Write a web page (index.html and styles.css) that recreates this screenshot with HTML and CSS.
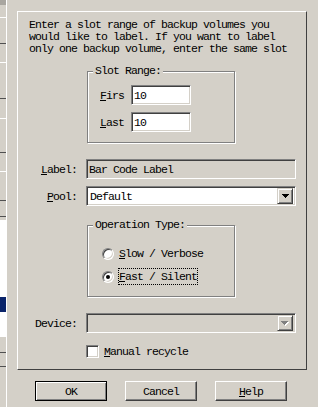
FILE: index.html
```html
<!DOCTYPE html>
<html lang="en">
<head>
  <meta charset="UTF-8">
  <title>Label Volumes</title>
  <link rel="stylesheet" href="styles.css">
</head>
<body>
  <div class="app">
    <div class="side">
      <div class="sd-top"></div>
      <div class="sp12"></div>
      <div class="sd-lt"></div>
      <div class="sp25"></div>
      <div class="sd-dk"></div>
      <div class="sp18"></div>
      <div class="sd-lt"></div>
      <div class="sp35"></div>
      <div class="sd-dk"></div>
      <div class="sp19"></div>
      <div class="sd-lt"></div>
      <div class="sp33"></div>
      <div class="sd-dk"></div>
      <div class="sp18"></div>
      <div class="sd-lt"></div>
      <div class="sp28"></div>
      <div class="sd-dk"></div>
      <div class="sp15"></div>
      <div class="sd-dk"></div>
      <div class="sp3"></div>
      <div class="sd-wh h77"></div>
      <div class="sd-sel"></div>
      <div class="sd-wh h25"></div>
      <div class="sp15"></div>
      <div class="sd-dk"></div>
      <div class="sp13"></div>
      <div class="sd-dk"></div>
    </div>

    <div class="main">
      <div class="panel">
        <p class="intro">Enter a slot range of backup volumes you<br>would like to label. If you want to label<br>only one backup volume, enter the same slot</p>

        <div class="grp slot">
          <div class="lgnd">Slot Range:</div>
          <div class="srow first"><span class="slab"><u>F</u>irs</span><div class="fld sfld">10</div></div>
          <div class="srow"><span class="slab"><u>L</u>ast</span><div class="fld sfld">10</div></div>
        </div>

        <div class="frow r-label">
          <span class="flab"><u>L</u>abel:</span>
          <div class="fld wide off">Bar Code Label</div>
        </div>

        <div class="frow r-pool">
          <span class="flab"><u>P</u>ool:</span>
          <div class="fld wide combo">
            <span class="ctxt">Default</span>
            <span class="ddbtn">
              <svg width="7" height="4" viewBox="0 0 7 4" shape-rendering="crispEdges"><path d="M0 0H7V1H6V2H5V3H4V4H3V3H2V2H1V1H0Z" fill="#000"/></svg>
            </span>
          </div>
        </div>

        <div class="grp optype">
          <div class="lgnd">Operation Type:</div>
          <div class="rrow first"><span class="radio"></span><span class="rtxt"><u>S</u>low / Verbose</span></div>
          <div class="rrow"><span class="radio on"></span><span class="rtxt focus"><u>F</u>ast / Silent</span></div>
        </div>

        <div class="frow r-dev">
          <span class="flab">Device:</span>
          <div class="fld wide off combo">
            <span class="ctxt"></span>
            <span class="ddbtn">
              <svg width="8" height="5" viewBox="0 0 8 5" shape-rendering="crispEdges"><path d="M1 1H8V2H7V3H6V4H5V5H4V4H3V3H2V2H1Z" fill="#fff"/><path d="M0 0H7V1H6V2H5V3H4V4H3V3H2V2H1V1H0Z" fill="#808080"/></svg>
            </span>
          </div>
        </div>

        <div class="chkrow">
          <span class="chk"></span><span class="ctxt2"><u>M</u>anual recycle</span>
        </div>
      </div>

      <div class="btns">
        <button class="btn dflt">OK</button>
        <button class="btn">Cancel</button>
        <button class="btn"><u>H</u>elp</button>
      </div>
    </div>
  </div>
</body>
</html>
```

FILE: styles.css
```css
body {
  margin: 0;
  background: #d4d0c8;
  color: #000;
  font-family: "Liberation Mono", "DejaVu Sans Mono", monospace;
  font-size: 11.5px;
  letter-spacing: -0.9px;
}

.app {
  display: flex;
  min-height: 407px;
}

/* strip of the window behind */
.side {
  width: 6px;
  border-right: 1px solid #fff;
  display: flex;
  flex-direction: column;
  flex-shrink: 0;
}
.side div { flex-shrink: 0; }
.sd-top { height: 5px; background: #a9a6a0; }
.sd-lt { height: 1px; background: #fff; }
.sd-dk { height: 1px; background: #505050; }
.sd-wh { background: #fff; }
.sd-sel { height: 15px; background: #0a246a; }
.h77 { height: 77px; }
.h25 { height: 25px; }
.sp3 { height: 3px; }
.sp12 { height: 12px; }
.sp13 { height: 13px; }
.sp15 { height: 15px; }
.sp18 { height: 18px; }
.sp19 { height: 19px; }
.sp25 { height: 25px; }
.sp28 { height: 28px; }
.sp33 { height: 33px; }
.sp35 { height: 35px; }

.main { flex: 1; }

.panel {
  margin: 11px 0 0 10px;
  width: 290px;
  box-sizing: border-box;
  border: 1px solid;
  border-color: #fff #404040 #404040 #fff;
  padding-bottom: 11px;
}

.intro {
  margin: 7px 0 0 11px;
  line-height: 12px;
  white-space: nowrap;
}

/* group boxes */
.grp {
  margin-left: 69px;
  width: 148px;
  box-sizing: border-box;
  border: 1px solid #808080;
  box-shadow: inset 1px 1px #fff, 1px 1px #fff;
  display: flex;
  flex-direction: column;
}
.lgnd {
  align-self: flex-start;
  margin: -7px 0 0 5px;
  padding: 0 2px;
  line-height: 12px;
  background: #d4d0c8;
}
.slot {
  margin-top: 16px;
  padding-bottom: 10px;
}
.optype {
  margin-top: 19px;
  padding-bottom: 11px;
}

.srow {
  display: flex;
  align-items: center;
  height: 20px;
  margin: 7px 0 0 12px;
}
.srow.first { margin-top: 8px; }
.slab { width: 24px; margin-right: 7px; }

/* edit fields */
.fld {
  box-sizing: border-box;
  height: 20px;
  border: 1px solid;
  border-color: #808080 #fff #fff #808080;
  box-shadow: inset 1px 1px #404040, inset -1px -1px #d4d0c8;
  background: #fff;
  padding: 0 2px;
  display: flex;
  align-items: center;
  white-space: nowrap;
}
.sfld { width: 60px; }
.wide { width: 210px; }
.off { background: #d4d0c8; }

.frow {
  display: flex;
  align-items: center;
  height: 20px;
}
.flab {
  width: 59px;
  margin-right: 9px;
  text-align: right;
}
.r-label { margin-top: 16px; }
.r-pool { margin-top: 7px; }
.r-dev { margin-top: 16px; }

.combo { padding-right: 2px; }
.ctxt { flex: 1; padding-left: 1px; }
.ddbtn {
  width: 16px;
  height: 16px;
  box-sizing: border-box;
  border: 1px solid;
  border-color: #d4d0c8 #404040 #404040 #d4d0c8;
  box-shadow: inset 1px 1px #fff, inset -1px -1px #808080;
  background: #d4d0c8;
  display: flex;
  align-items: center;
  justify-content: center;
}

/* radios */
.rrow {
  display: flex;
  align-items: center;
  height: 17px;
  margin: 6px 0 0 14px;
}
.rrow.first { margin-top: 14px; }
.radio {
  width: 12px;
  height: 12px;
  box-sizing: border-box;
  border-radius: 50%;
  border: 1px solid;
  border-color: #808080 #fff #fff #808080;
  box-shadow: inset 1px 1px #404040, inset -1px -1px #d4d0c8;
  background: #fff;
  display: flex;
  align-items: center;
  justify-content: center;
  margin-right: 4px;
}
.radio.on::after {
  content: "";
  width: 4px;
  height: 4px;
  border-radius: 50%;
  background: #000;
}
.rtxt {
  border: 1px solid transparent;
  line-height: 15px;
}
.rtxt.focus { border: 1px dotted #000; }

/* checkbox */
.chkrow {
  display: flex;
  align-items: center;
  height: 13px;
  margin: 12px 0 0 68px;
}
.chk {
  width: 13px;
  height: 13px;
  box-sizing: border-box;
  border: 1px solid;
  border-color: #808080 #fff #fff #808080;
  box-shadow: inset 1px 1px #404040, inset -1px -1px #d4d0c8;
  background: #fff;
  margin-right: 5px;
}

/* buttons */
.btns {
  display: flex;
  gap: 18px;
  margin: 11px 0 0 28px;
}
.btn {
  width: 72px;
  height: 20px;
  box-sizing: border-box;
  padding: 0;
  font: inherit;
  letter-spacing: inherit;
  color: #000;
  background: #d4d0c8;
  border: 1px solid;
  border-color: #fff #404040 #404040 #fff;
  box-shadow: inset -1px -1px #808080;
}
.btn.dflt {
  border-color: #000;
  box-shadow: inset 1px 1px #fff, inset -1px -1px #808080;
}
```
